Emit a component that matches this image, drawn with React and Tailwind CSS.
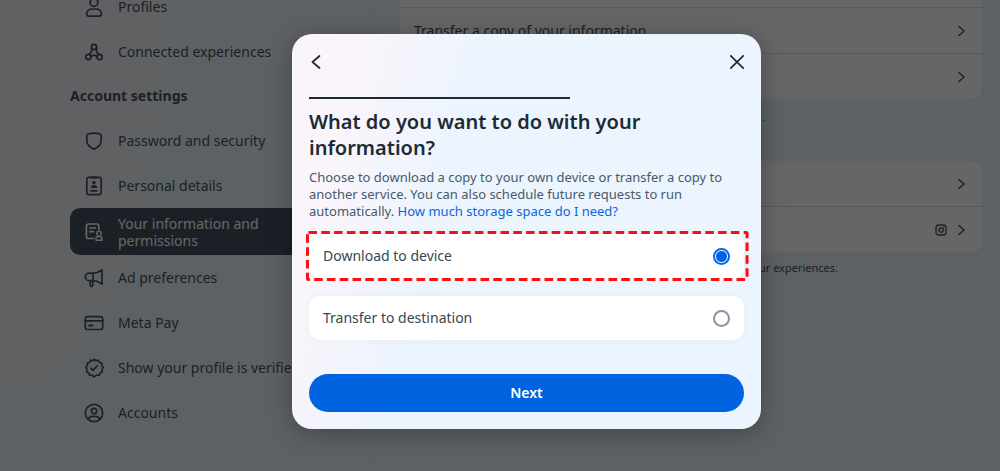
import { useState } from 'react'

const mainItems = [
    { icon: ProfileIcon, label: 'Profiles' },
    { icon: ConnectedIcon, label: 'Connected experiences' },
]

const accountItems = [
    { icon: ShieldIcon, label: 'Password and security' },
    { icon: BadgeIcon, label: 'Personal details' },
    { icon: PermissionsIcon, label: 'Your information and permissions', active: true },
    { icon: MegaphoneIcon, label: 'Ad preferences' },
    { icon: CardIcon, label: 'Meta Pay' },
    { icon: VerifiedIcon, label: 'Show your profile is verified' },
    { icon: AccountIcon, label: 'Accounts' },
]

export default function App() {
    const [choice, setChoice] = useState('device')

    return (
        <div className="relative h-screen overflow-hidden font-['Noto_Sans',sans-serif] text-[#1c2b33]">
            <div className="flex h-full overflow-hidden bg-[#ecf3f8] bg-[radial-gradient(ellipse_180px_420px_at_0_0,#f7f0f3_0%,#f4f1f5_50%,#ecf3f8_100%)] text-[#43535f]">
                {/* Sidebar */}
                <aside className="w-[372px] shrink-0 border-r border-[#e2e9ee] pl-[70px] pr-6">
                    <nav className="-mt-4">
                        {mainItems.map((item) => <NavItem key={item.label} {...item} />)}
                        <h2 className="flex h-11 items-center text-sm font-bold">Account settings</h2>
                        {accountItems.map((item) => <NavItem key={item.label} {...item} />)}
                    </nav>
                </aside>

                {/* Settings list */}
                <main className="-mt-[38px] min-w-0 flex-1 pl-7 pr-[18px]">
                    <Card>
                        <Row />
                        <Row label="Transfer a copy of your information" />
                        <Row />
                    </Card>
                    <p className="mb-9 mt-2.5 pr-[217px] text-right text-[11px] leading-4">.</p>
                    <Card>
                        <Row />
                        <Row instagram />
                    </Card>
                    <p className="mt-2 pr-36 text-right text-[11px] leading-4">your experiences.</p>
                </main>
            </div>

            {/* Dialog */}
            <div className="absolute inset-0 flex items-center justify-center bg-black/60 pb-2 pl-[53px]">
                <div role="dialog" aria-labelledby="dialog-title" className="w-full max-w-[469px] rounded-[20px] bg-[linear-gradient(105deg,#fbf5fa_0%,#f9f5fb_14%,#ecf4fe_34%,#ecf5ff_100%)] px-[17px] pb-[17px] shadow-[0_4px_24px_rgba(0,0,0,0.3)]">
                    <div className="flex h-[63px] items-start justify-between pt-[17px]">
                        <button aria-label="Back" className="py-1">
                            <svg width="14" height="14" viewBox="0 0 14 14" fill="none" stroke="currentColor" strokeWidth="1.7" strokeLinecap="round" strokeLinejoin="round">
                                <path d="M10.5 1 3.5 7l7 6" />
                            </svg>
                        </button>
                        <button aria-label="Close" className="py-1">
                            <svg width="14" height="14" viewBox="0 0 14 14" fill="none" stroke="currentColor" strokeWidth="1.7" strokeLinecap="round">
                                <path d="M.8.8 13.2 13.2M13.2.8.8 13.2" />
                            </svg>
                        </button>
                    </div>
                    <div className="h-0.5 w-3/5 bg-[#1c2b33]"></div>
                    <h1 id="dialog-title" className="mt-2.5 text-xl font-semibold leading-[26px]">
                        What do you want to do with your information?
                    </h1>
                    <p className="mt-2 text-[13px] leading-[17px] text-[#465a69]">
                        Choose to download a copy to your own device or transfer a copy to another service. You can also schedule future requests to run automatically. <a href="#storage" className="text-[#0a66e0]">How much storage space do I need?</a>
                    </p>

                    <div className="mt-3.5 space-y-[18px]">
                        <Option label="Download to device" value="device" choice={choice} onChange={setChoice} marked />
                        <Option label="Transfer to destination" value="destination" choice={choice} onChange={setChoice} />
                    </div>

                    <button className="mt-[34px] h-[38px] w-full rounded-full bg-[#0064e0] text-sm font-semibold text-white">
                        Next
                    </button>
                </div>
            </div>
        </div>
    )
}

function NavItem({ icon: Icon, label, active }) {
    return (
        <a href="#settings" className={`flex items-center gap-3.5 rounded-[10px] pl-3.5 pr-8 text-sm leading-[17px] ${active ? 'h-[47px] bg-[#445261] text-white' : 'h-[45px] whitespace-nowrap'}`}>
            <Icon />
            <span>{label}</span>
        </a>
    )
}

function Card({ children }) {
    return <div className="divide-y divide-[#d5dbe0] rounded-[10px] bg-white">{children}</div>
}

function Row({ label, instagram }) {
    return (
        <a href="#row" className="flex h-[46px] items-center justify-between pl-3.5 pr-4 text-sm last:h-[45px]">
            <span>{label}</span>
            <span className="flex items-center gap-2.5">
                {instagram && <InstagramIcon />}
                <svg width="9" height="12" viewBox="0 0 9 12" fill="none" stroke="currentColor" strokeWidth="1.5" strokeLinecap="round" strokeLinejoin="round">
                    <path d="m2 1.5 5 4.5-5 4.5" />
                </svg>
            </span>
        </a>
    )
}

function Option({ label, value, choice, onChange, marked }) {
    return (
        <label className="relative flex h-11 cursor-pointer items-center justify-between rounded-[10px] bg-white px-3.5 text-sm text-[#344854] shadow-[0_0_6px_rgba(60,90,120,0.06)]">
            {label}
            <input
                type="radio"
                name="export"
                value={value}
                checked={choice === value}
                onChange={() => onChange(value)}
                className="size-[17px] appearance-none rounded-full border-2 border-[#8595a4] bg-white checked:border-[#0a66e0] checked:bg-[radial-gradient(circle,#0064e0_5px,transparent_6px)]"
            />
            {marked && (
                <svg className="pointer-events-none absolute -left-1 -top-1 h-[calc(100%+8px)] w-[calc(100%+9px)] overflow-visible" fill="none">
                    <rect x="2.5" y="2.5" width="99%" height="47" rx="1" stroke="#fb0d12" strokeWidth="3" strokeDasharray="8.500 4.300" />
                </svg>
            )}
        </label>
    )
}

function Icon({ children }) {
    return (
        <svg className="shrink-0" width="20" height="20" viewBox="0 0 20 20" fill="none" stroke="currentColor" strokeWidth="1.7" strokeLinecap="round" strokeLinejoin="round">
            {children}
        </svg>
    )
}

function ProfileIcon() {
    return (
        <Icon>
            <circle cx="10" cy="5.500" r="3.900" />
            <path d="M2.700 17.200C2.700 13.500 5.500 12 8 12h4c2.500 0 5.300 1.500 5.300 5.200 0 1.200-.7 1.900-1.900 1.900H4.600c-1.200 0-1.900-.7-1.900-1.900Z" />
        </Icon>
    )
}

function ConnectedIcon() {
    return (
        <Icon>
            <circle cx="10" cy="5" r="2.600" />
            <circle cx="4.400" cy="15" r="2.600" />
            <circle cx="15.600" cy="15" r="2.600" />
            <path d="M7.600 6.200v3.400L5.400 12.600M12.400 6.200v3.400l2.200 3M7 14.600l3-1.600 3 1.600" />
        </Icon>
    )
}

function ShieldIcon() {
    return (
        <Icon>
            <path d="M10 2.200c2 0 4.600.4 6.200 1 .7.300 1 .8 1 1.500v4.500c0 4.500-3.600 7.400-7.200 8.900-3.600-1.500-7.200-4.400-7.200-8.900V4.700c0-.7.300-1.200 1-1.500 1.600-.6 4.200-1 6.200-1Z" />
        </Icon>
    )
}

function BadgeIcon() {
    return (
        <Icon>
            <rect x="2.800" y="1.300" width="14.400" height="17.400" rx="1.600" />
            <path d="M7.500 1.500h5" strokeWidth="2.200" />
            <circle cx="10" cy="6.600" r="1.800" fill="currentColor" stroke="none" />
            <path d="M6.800 12c0-2 1.400-2.900 3.200-2.900s3.200.9 3.200 2.900Z" fill="currentColor" stroke="none" />
            <path d="M7 14.800h6" />
        </Icon>
    )
}

function PermissionsIcon() {
    return (
        <Icon>
            <path d="M9.500 16.500H4.400a2 2 0 0 1-2-2V4a2 2 0 0 1 2-2h8.400a2 2 0 0 1 2 2v3.200M6 6h5.500M6 9.700h3.500" />
            <path d="M14 14.600c0-1.200-1.100-1.800-1.100-3.200a2.100 2.100 0 0 1 4.200 0c0 1.400-1.100 2-1.100 3.200M12 18.200v-2.300c0-.7.500-1.200 1.200-1.200h3.600c.7 0 1.200.5 1.200 1.200v2.300Z" strokeWidth="1.400" />
        </Icon>
    )
}

function MegaphoneIcon() {
    return (
        <Icon>
            <path d="M5 5.200h4.200c3.200 0 6.200-1.300 8.800-3.200v14c-2.600-2-5.600-3.400-8.800-3.400H5a3.700 3.700 0 0 1 0-7.400ZM6.200 12.800v4.400c0 .8.400 1.300 1.200 1.300s1.300-.5 1.300-1.300v-4.400M9 5.400v7" />
        </Icon>
    )
}

function CardIcon() {
    return (
        <Icon>
            <rect x="1.300" y="3.700" width="17.400" height="12.800" rx="2.300" />
            <path d="M1.500 7.800h17M5 12.500h3.500" strokeWidth="1.800" />
        </Icon>
    )
}

function VerifiedIcon() {
    return (
        <Icon>
            <path d="m10 1.200 1.900 1.500 2.400-.6 1 2.200 2.400.8-.1 2.400 1.600 1.900-1.300 2 .5 2.400-2.200 1.100-.7 2.300-2.500-.1L10 18.800l-2-1.700-2.500.1-.7-2.300-2.200-1.100.5-2.400-1.300-2 1.600-1.900-.1-2.400 2.400-.8 1-2.200 2.400.6Z" />
            <path d="m6.800 10.200 2.200 2.200 4.300-4.600" />
        </Icon>
    )
}

function AccountIcon() {
    return (
        <Icon>
            <circle cx="10" cy="10" r="8.700" />
            <circle cx="10" cy="8" r="2.700" />
            <path d="M4.300 16.200c.8-2 2.500-2.900 4.200-2.900h3c1.700 0 3.400.9 4.200 2.900" />
        </Icon>
    )
}

function InstagramIcon() {
    return (
        <svg width="12" height="12" viewBox="0 0 12 12" fill="none" stroke="currentColor" strokeWidth="1.300">
            <rect x="1" y="1" width="10" height="10" rx="2.600" />
            <circle cx="6" cy="6" r="2.200" />
            <circle cx="8.800" cy="3.200" r=".7" fill="currentColor" stroke="none" />
        </svg>
    )
}
